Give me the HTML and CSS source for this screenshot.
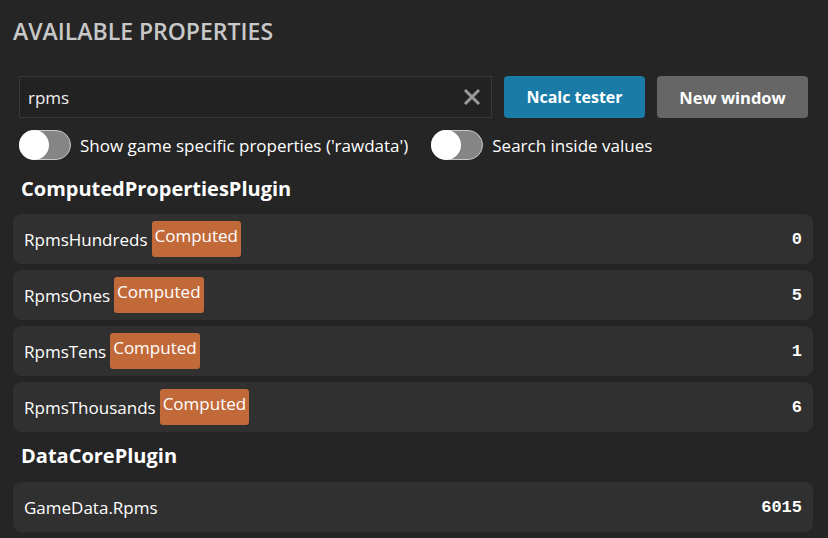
FILE: index.html
```html
<!DOCTYPE html>
<html>
<head>
<meta charset="utf-8">
<link rel="stylesheet" href="styles.css">
</head>
<body>
<div class="page">
  <h1 class="title">AVAILABLE PROPERTIES</h1>
  <div class="controls">
    <div class="search-row">
      <div class="search">
        <span class="search-text">rpms</span>
        <svg class="clear" width="18" height="18" viewBox="0 0 18 18"><path d="M2 2 L16 16 M16 2 L2 16" stroke="#9a9a9a" stroke-width="3" stroke-linecap="butt"/></svg>
      </div>
      <button class="btn btn-blue">Ncalc tester</button>
      <button class="btn btn-gray">New window</button>
    </div>
    <div class="toggle-row">
      <label class="toggle-item"><span class="toggle"><span class="knob"></span></span><span class="toggle-label">Show game specific properties ('rawdata')</span></label>
      <label class="toggle-item"><span class="toggle"><span class="knob"></span></span><span class="toggle-label">Search inside values</span></label>
    </div>
  </div>
  <h2 class="section section-first">ComputedPropertiesPlugin</h2>
  <div class="rows">
    <div class="row"><span class="name">RpmsHundreds</span><span class="badge">Computed</span><span class="value">0</span></div>
    <div class="row"><span class="name">RpmsOnes</span><span class="badge">Computed</span><span class="value">5</span></div>
    <div class="row"><span class="name">RpmsTens</span><span class="badge">Computed</span><span class="value">1</span></div>
    <div class="row"><span class="name">RpmsThousands</span><span class="badge">Computed</span><span class="value">6</span></div>
  </div>
  <h2 class="section">DataCorePlugin</h2>
  <div class="rows">
    <div class="row"><span class="name">GameData.Rpms</span><span class="value">6015</span></div>
  </div>
</div>
</body>
</html>
```
FILE: styles.css
```css
html, body {
  margin: 0;
  padding: 0;
  background: #252525;
  height: 100%;
  overflow: hidden;
}
body {
  font-family: "Open Sans", "Noto Sans", sans-serif;
  color: #ffffff;
}
.page {
  padding: 12px 15px 0 13px;
}
.title {
  margin: 0;
  font-size: 23px;
  line-height: 38px;
  font-weight: 600;
  color: #c8c8c8;
}
.controls {
  padding: 0 5px 0 6px;
  margin-top: 26px;
}
.search-row {
  display: flex;
  gap: 12px;
  align-items: stretch;
  height: 42px;
}
.search {
  flex: 1;
  display: flex;
  align-items: center;
  justify-content: space-between;
  border: 1px solid #383838;
  background: #222222;
  padding: 0 10px 0 8px;
}
.search-text {
  font-size: 17px;
  color: #f0f0f0;
}
.clear {
  display: block;
}
.btn {
  border: none;
  border-radius: 4px;
  font-family: "Open Sans", "Noto Sans", sans-serif;
  font-size: 16px;
  font-weight: 700;
  color: #ffffff;
  padding: 0;
}
.btn-blue {
  background: #1a7ba6;
  width: 141px;
}
.btn-gray {
  background: #666666;
  width: 151px;
  font-size: 16.5px;
}
.toggle-row {
  display: flex;
  gap: 23px;
  margin-top: 12px;
  height: 30px;
  align-items: center;
}
.toggle-item {
  display: flex;
  align-items: center;
  gap: 9px;
}
.toggle {
  position: relative;
  width: 50px;
  height: 28px;
  border-radius: 15px;
  background: #858585;
  border: 1px solid #c8c8c8;
  display: block;
}
.knob {
  position: absolute;
  left: -1px;
  top: -1px;
  width: 30px;
  height: 30px;
  border-radius: 50%;
  background: #ffffff;
}
.toggle-label {
  font-size: 17px;
  color: #ffffff;
}
.section {
  margin: 0;
  padding: 10px 0 0 8px;
  font-size: 20px;
  font-weight: 700;
  line-height: 28px;
  height: 50px;
  box-sizing: border-box;
}
.section-first {
  margin-top: 2px;
  padding-top: 13px;
  height: 52px;
}
.rows {
  display: flex;
  flex-direction: column;
  gap: 6px;
}
.row {
  display: flex;
  align-items: center;
  height: 50px;
  background: #303030;
  border-radius: 8px;
  padding: 0 11px 0 11px;
}
.name {
  font-size: 17px;
  color: #ffffff;
}
.badge {
  margin-left: 4px;
  background: #c2693a;
  color: #ffffff;
  font-size: 17px;
  height: 36px;
  line-height: 30px;
  padding: 0 3px;
  border-radius: 3px;
  box-sizing: border-box;
}
.value {
  margin-left: auto;
  font-family: "Liberation Mono", "DejaVu Sans Mono", monospace;
  font-weight: 700;
  font-size: 17px;
  color: #ffffff;
}
```
